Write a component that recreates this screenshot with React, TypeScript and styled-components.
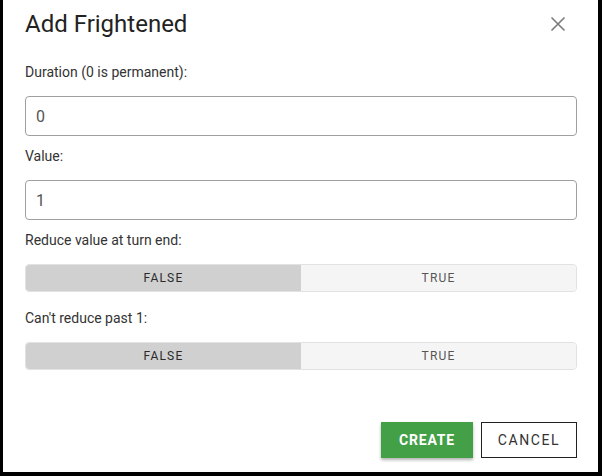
import React from "react";
import styled, { createGlobalStyle } from "styled-components";

const Global = createGlobalStyle`
  html, body { margin: 0; padding: 0; background: #000; }
  body { font-family: Roboto, "Liberation Sans", Arial, sans-serif; }
  * { box-sizing: border-box; }
`;

const Frame = styled.div`
  width: 602px;
  height: 476px;
  background: #000;
  padding: 0 4px 4px 3px;
`;

const Dialog = styled.div`
  width: 595px;
  height: 472px;
  background: #fff;
  padding: 8px 21px 0 22px;
  display: flex;
  flex-direction: column;
`;

const Header = styled.div`
  display: flex;
  align-items: center;
  justify-content: space-between;
  height: 32px;
`;

const Title = styled.h2`
  margin: 0;
  font-size: 24px;
  line-height: 32px;
  font-weight: 400;
  color: #222;
`;

const CloseButton = styled.button`
  border: none;
  background: none;
  padding: 0;
  width: 24px;
  height: 24px;
  margin-right: 7px;
  color: #7a7a7a;
  display: flex;
  align-items: center;
  justify-content: center;
  cursor: pointer;
`;

const Field = styled.div<{ $top: number }>`
  display: flex;
  flex-direction: column;
  margin-top: ${(p) => p.$top}px;
`;

const Label = styled.label`
  font-size: 14px;
  line-height: 20px;
  color: #333;
  margin-bottom: 14px;
`;

const Input = styled.input`
  width: 100%;
  height: 40px;
  border: 1px solid #a0a0a0;
  border-radius: 4px;
  padding: 0 10px;
  font-family: inherit;
  font-size: 16px;
  color: #555;
  outline: none;
`;

const Toggle = styled.div`
  display: flex;
  height: 28px;
  border: 1px solid #e2e2e2;
  border-radius: 4px;
  overflow: hidden;
`;

const ToggleOption = styled.button<{ $active?: boolean }>`
  flex: 1;
  border: none;
  margin: 0;
  padding: 0;
  font-family: inherit;
  font-size: 12px;
  letter-spacing: 1.2px;
  background: ${(p) => (p.$active ? "#d0d0d0" : "#f5f5f5")};
  color: ${(p) => (p.$active ? "#2a2a2a" : "#555")};
`;

const Actions = styled.div`
  display: flex;
  justify-content: flex-end;
  gap: 8px;
  margin-top: 52px;
`;

const Button = styled.button<{ $primary?: boolean }>`
  height: 36px;
  padding: 0;
  width: ${(p) => (p.$primary ? 92 : 96)}px;
  font-family: inherit;
  font-size: 14px;
  letter-spacing: ${(p) => (p.$primary ? 0.8 : 1.6)}px;
  font-weight: ${(p) => (p.$primary ? 700 : 400)};
  color: ${(p) => (p.$primary ? "#fff" : "#333")};
  background: ${(p) => (p.$primary ? "#43a047" : "#fff")};
  border: ${(p) => (p.$primary ? "none" : "1px solid #222")};
  box-shadow: ${(p) => (p.$primary ? "0 2px 3px rgba(0,0,0,0.3)" : "none")};
`;

const BoolToggle = () => (
  <Toggle>
    <ToggleOption $active>FALSE</ToggleOption>
    <ToggleOption>TRUE</ToggleOption>
  </Toggle>
);

export default function App() {
  return (
    <>
      <Global />
      <Frame>
        <Dialog>
          <Header>
            <Title>Add Frightened</Title>
            <CloseButton aria-label="close">
              <svg width="24" height="24" viewBox="0 0 24 24" fill="none" stroke="currentColor" strokeWidth="1.6">
                <path d="M5.5 5.5 18.5 18.5M18.5 5.5 5.5 18.5" />
              </svg>
            </CloseButton>
          </Header>
          <Field $top={22}>
            <Label>Duration (0 is permanent):</Label>
            <Input defaultValue="0" />
          </Field>
          <Field $top={10}>
            <Label>Value:</Label>
            <Input defaultValue="1" />
          </Field>
          <Field $top={10}>
            <Label>Reduce value at turn end:</Label>
            <BoolToggle />
          </Field>
          <Field $top={16}>
            <Label>Can't reduce past 1:</Label>
            <BoolToggle />
          </Field>
          <Actions>
            <Button $primary>CREATE</Button>
            <Button>CANCEL</Button>
          </Actions>
        </Dialog>
      </Frame>
    </>
  );
}
